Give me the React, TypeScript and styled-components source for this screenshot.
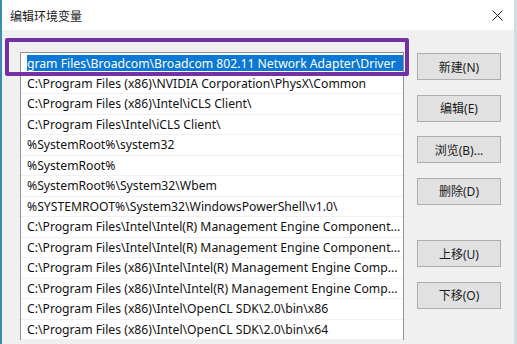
import styled, { createGlobalStyle } from 'styled-components';

const GlobalStyle = createGlobalStyle`
  html, body {
    margin: 0;
    padding: 0;
    background: #ffffff;
  }
  body {
    width: 517px;
    height: 344px;
    overflow: hidden;
    font-family: "Noto Sans", "Noto Sans CJK SC", sans-serif;
  }
`;

const Window = styled.div`
  position: relative;
  width: 517px;
  height: 344px;
  box-sizing: border-box;
  display: flex;
  flex-direction: column;
  border-left: 2px solid #3a8db0;
  border-right: 3px solid #cfdde4;
  overflow: hidden;
`;

const TitleBar = styled.div`
  height: 30px;
  flex: 0 0 30px;
  background: #ffffff;
  display: flex;
  align-items: center;
  justify-content: space-between;
  padding: 0 10px 0 8px;
`;

const Title = styled.span`
  font-family: "Noto Sans CJK SC", sans-serif;
  font-size: 12px;
  color: #1a1a1a;
`;

const CloseIcon = styled.svg`
  width: 11px;
  height: 11px;
  margin-right: 1px;
`;

const Body = styled.div`
  flex: 1;
  background: #f0f0f0;
  display: flex;
  align-items: flex-start;
  padding: 22px 0 0 18px;
`;

const ListBox = styled.div`
  width: 384px;
  box-sizing: border-box;
  border: 1px solid #8f939a;
  border-bottom: none;
  background: #ffffff;
  display: flex;
  flex-direction: column;
`;

const Row = styled.div`
  height: 20.5px;
  box-sizing: border-box;
  display: flex;
  align-items: center;
  padding: 0 1px 0 6px;
  border-bottom: 1px solid #f1f1f1;
  font-size: 12.2px;
  color: #111111;
  white-space: nowrap;
  overflow: hidden;
`;

const EditRow = styled(Row)`
  padding: 0 0 0 6px;
  border-bottom: none;
`;

const Selected = styled.span`
  display: flex;
  align-items: center;
  height: 16px;
  flex: 1;
  background: #0a78d4;
  color: #ffffff;
  overflow: hidden;
`;

const Buttons = styled.div`
  display: flex;
  flex-direction: column;
  gap: 14.5px;
  margin: 1px 0 0 13px;
`;

const Button = styled.button<{ $gapBefore?: number }>`
  width: 84px;
  height: 27px;
  margin-top: ${(p) => p.$gapBefore ?? 0}px;
  box-sizing: border-box;
  border: 1px solid #adadad;
  background: #e1e1e1;
  font-family: "Noto Sans", "Noto Sans CJK SC", sans-serif;
  font-size: 12px;
  color: #1a1a1a;
  padding: 0;
`;

const Highlight = styled.div`
  position: absolute;
  left: 3px;
  top: 38px;
  width: 404px;
  height: 38px;
  box-sizing: border-box;
  border: 4px solid #7431a6;
  border-radius: 2px;
  pointer-events: none;
`;

const paths = [
  'C:\\Program Files (x86)\\NVIDIA Corporation\\PhysX\\Common',
  'C:\\Program Files (x86)\\Intel\\iCLS Client\\',
  'C:\\Program Files\\Intel\\iCLS Client\\',
  '%SystemRoot%\\system32',
  '%SystemRoot%',
  '%SystemRoot%\\System32\\Wbem',
  '%SYSTEMROOT%\\System32\\WindowsPowerShell\\v1.0\\',
  'C:\\Program Files\\Intel\\Intel(R) Management Engine Component...',
  'C:\\Program Files\\Intel\\Intel(R) Management Engine Component...',
  'C:\\Program Files (x86)\\Intel\\Intel(R) Management Engine Comp...',
  'C:\\Program Files (x86)\\Intel\\Intel(R) Management Engine Comp...',
  'C:\\Program Files (x86)\\Intel\\OpenCL SDK\\2.0\\bin\\x86',
  'C:\\Program Files (x86)\\Intel\\OpenCL SDK\\2.0\\bin\\x64',
];

export default function App() {
  return (
    <>
      <GlobalStyle />
      <Window>
        <TitleBar>
          <Title>编辑环境变量</Title>
          <CloseIcon viewBox="0 0 11 11">
            <path d="M0.5 0.5 L10.5 10.5 M10.5 0.5 L0.5 10.5" stroke="#222" strokeWidth="1" fill="none" />
          </CloseIcon>
        </TitleBar>
        <Body>
          <ListBox>
            <EditRow>
              <Selected>gram Files\Broadcom\Broadcom 802.11 Network Adapter\Driver</Selected>
            </EditRow>
            {paths.map((p, i) => (
              <Row key={i}>{p}</Row>
            ))}
          </ListBox>
          <Buttons>
            <Button>新建(N)</Button>
            <Button>编辑(E)</Button>
            <Button>浏览(B)...</Button>
            <Button>删除(D)</Button>
            <Button $gapBefore={21}>上移(U)</Button>
            <Button>下移(O)</Button>
          </Buttons>
        </Body>
        <Highlight />
      </Window>
    </>
  );
}
